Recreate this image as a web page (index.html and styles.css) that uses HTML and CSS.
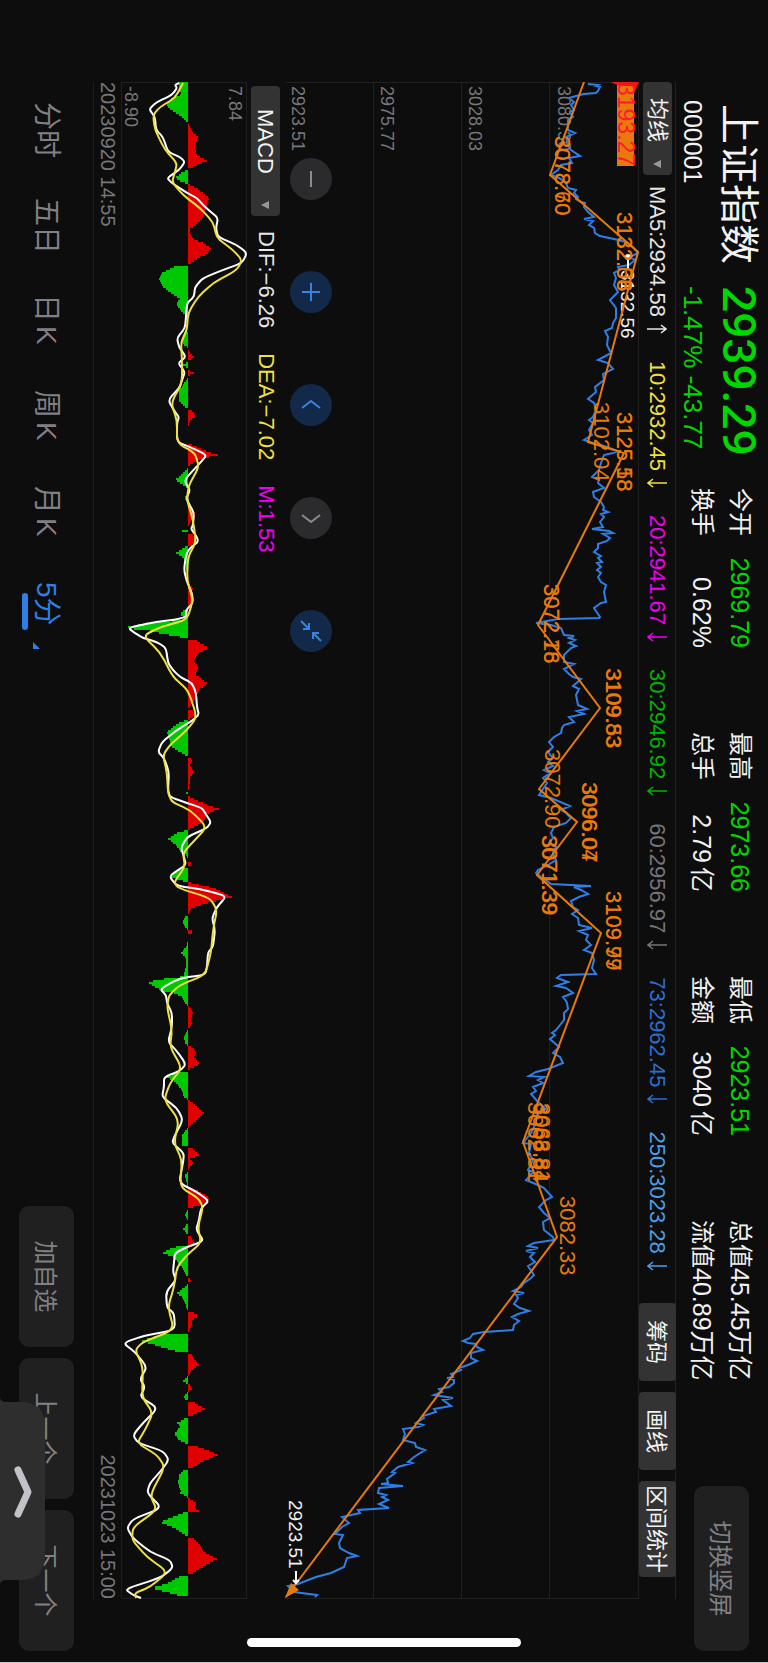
FILE: index.html
```html
<!DOCTYPE html>
<html lang="zh-CN">
<head>
    <meta charset="UTF-8">
    <meta name="viewport" content="width=device-width, initial-scale=1.0">
    <title>上证指数 000001</title>
    <link rel="stylesheet" href="styles.css">
</head>
<body>

<svg class="defs" width="0" height="0">
    <symbol id="up" viewBox="0 0 14 20"><path d="M7 20V1M3 6l4-5 4 5"/></symbol>
    <symbol id="down" viewBox="0 0 14 20"><path d="M7 0v19M3 14l4 5 4-5"/></symbol>
</svg>

<div class="stage">
<div class="screen">
    <!-- Quote header -->
    <header class="quote">
        <div class="stock">
            <h1>上证指数</h1>
            <p>000001</p>
        </div>
        <div class="price">
            <strong>2939.29</strong>
            <p>-1.47% -43.77</p>
        </div>
        <dl class="stats">
            <div><dt>今开</dt><dd class="green">2969.79</dd></div>
            <div><dt>最高</dt><dd class="green">2973.66</dd></div>
            <div><dt>最低</dt><dd class="green">2923.51</dd></div>
            <div><dt>总值</dt><dd>45.45万亿</dd></div>
            <div><dt>换手</dt><dd>0.62%</dd></div>
            <div><dt>总手</dt><dd>2.79<span class="unit">亿</span></dd></div>
            <div><dt>金额</dt><dd>3040<span class="unit">亿</span></dd></div>
            <div><dt>流值</dt><dd>40.89万亿</dd></div>
        </dl>
        <button class="btn switch-btn">切换竖屏</button>
    </header>

    <main class="charts">
        <!-- Moving averages -->
        <div class="indicator-row ma-row">
            <div class="picker">
                <select aria-label="主图指标"><option>均线</option></select>
                <svg viewBox="0 0 8 8"><path d="M0 0h8L4 8z"/></svg>
            </div>
            <ul class="values">
                <li class="c-white">MA5:2934.58<svg><use href="#up"/></svg></li>
                <li class="c-yellow">10:2932.45<svg><use href="#down"/></svg></li>
                <li class="c-pink">20:2941.67<svg><use href="#down"/></svg></li>
                <li class="c-green">30:2946.92<svg><use href="#down"/></svg></li>
                <li class="c-grey">60:2956.97<svg><use href="#down"/></svg></li>
                <li class="c-blue">73:2962.45<svg><use href="#down"/></svg></li>
                <li class="c-sky">250:3023.28<svg><use href="#down"/></svg></li>
            </ul>
            <div class="tools">
                <button>筹码</button>
                <button>画线</button>
                <button class="wide">区间统计</button>
            </div>
        </div>

        <!-- Price chart -->
        <div class="price-chart">
            <svg id="priceChart" viewBox="82 130 1517 354">
                <path class="grid" d="M82 130.5H1599M82 219.5H1599M82 307.5H1599M82 395.5H1599M82.5 130V484M1598.5 130V484"/>
                <g class="axis">
                    <text x="86" y="211">3080.30</text>
                    <text x="86" y="300">3028.03</text>
                    <text x="86" y="388">2975.77</text>
                    <text x="86" y="477">2923.51</text>
                </g>
                <polyline id="priceLine" class="price-line"/>
                <path class="mark" d="M257 141H269"/>
                <circle class="mark-dot" cx="257" cy="141" r="3"/>
                <text class="mark-text" x="270" y="148">3132.56</text>
                <rect class="flag" x="82" y="135" width="84" height="17"/>
                <path class="flag-tip" d="M82 130v28l4-8v-14l5-2z"/>
                <polyline id="waveLine" class="wave-line"/>
                <path class="wave-tip" d="M1583 478l7-8 8 14z"/>
                <g id="waveLabels" class="wave-labels"></g>
                <text class="flag-text" x="83" y="151">3193.27</text>
                <text class="mark-text" x="1500" y="480">2923.51</text>
                <path class="mark" d="M1571 473h12M1580 470l3 3-3 3"/>
            </svg>
            <div class="chart-controls">
                <button aria-label="缩小"><svg viewBox="0 0 42 42"><path d="M13 21h16"/></svg></button>
                <button aria-label="放大" class="on"><svg viewBox="0 0 42 42"><path d="M12 21h18M21 12v18"/></svg></button>
                <button aria-label="左移" class="on"><svg viewBox="0 0 42 42"><path d="M24 12l-7 9 7 9"/></svg></button>
                <button aria-label="右移"><svg viewBox="0 0 42 42"><path d="M18 12l7 9-7 9"/></svg></button>
                <button aria-label="收起" class="on"><svg viewBox="0 0 42 42"><path d="M31 11l-8 8M23 13v6h6M11 31l8-8M13 23h6v6"/></svg></button>
            </div>
        </div>

        <!-- MACD -->
        <div class="indicator-row macd-row">
            <div class="picker macd-picker">
                <select aria-label="副图指标"><option>MACD</option></select>
                <svg viewBox="0 0 8 8"><path d="M0 0h8L4 8z"/></svg>
            </div>
            <ul class="values">
                <li class="c-white">DIF:−6.26</li>
                <li class="c-yellow">DEA:−7.02</li>
                <li class="c-pink">M:1.53</li>
            </ul>
        </div>
        <svg id="macdChart" class="macd-chart" viewBox="82 521 1517 126">
            <path class="grid" d="M82 521.5H1599M82 646.5H1599M82.5 521V647M1598.5 521V647"/>
            <g class="axis">
                <text x="86" y="539">7.84</text>
                <text x="86" y="643">-8.90</text>
            </g>
            <path id="barsUp" class="bars-up"/>
            <path id="barsDown" class="bars-down"/>
            <path id="difLine" class="dif-line"/>
            <path id="deaLine" class="dea-line"/>
        </svg>
        <div class="dates">
            <time>20230920 14:55</time>
            <time>20231023 15:00</time>
        </div>
    </main>

    <!-- Period tabs and actions -->
    <footer class="bottom">
        <nav class="tabs">
            <a href="#">分时</a>
            <a href="#">五日</a>
            <a href="#">日<span class="unit">K</span></a>
            <a href="#">周<span class="unit">K</span></a>
            <a href="#">月<span class="unit">K</span></a>
            <a href="#" class="active">5分</a>
        </nav>
        <div class="actions">
            <button class="btn">加自选</button>
            <button class="btn">上一个</button>
            <button class="btn">下一个</button>
        </div>
    </footer>

    <button class="drawer" aria-label="展开">
        <svg viewBox="0 0 186 45">
            <path class="drawer-bg" d="M0 45q4-1 4-6V24Q4 0 28 0H158q24 0 24 24v15q0 5 4 6z"/>
            <path class="drawer-arrow" d="M72 27l22-10 22 10"/>
        </svg>
    </button>
    <div class="home-bar"></div>
</div>
</div>

<script src="script.js"></script>
</body>
</html>
```
FILE: styles.css
```css
* {
    box-sizing: border-box;
    margin: 0;
    padding: 0;
}

body {
    background-color: #0d0d0d;
    color: #f2f2f2;
    font-family: "Liberation Sans", "Noto Sans CJK SC", sans-serif;
}

button,
select {
    border: none;
    color: inherit;
    font-family: inherit;
    cursor: pointer;
}

ul {
    list-style: none;
}

.defs {
    position: absolute;
}

.stage {
    position: relative;
    width: 100%;
    height: 100vh;
    overflow: hidden;
}

/* Landscape screen, turned clockwise */
.screen {
    position: relative;
    display: flex;
    flex-direction: column;
    width: 100vh;
    height: 100vw;
    border-right: 1px solid #c8c8c8;
    transform-origin: 0 0;
    transform: translateX(100vw) rotate(90deg);
}

/* Quote header */
.quote {
    display: flex;
    height: 92px;
    padding: 0 11px 0 100px;
}

.stock {
    width: 186px;
}

.stock h1 {
    padding-left: 4px;
    font-size: 40px;
    font-weight: 400;
    line-height: 58px;
    white-space: nowrap;
}

.stock p,
.price p {
    font-size: 25px;
    line-height: 34px;
}

.price {
    width: 202px;
    color: #00d600;
    white-space: nowrap;
}

.price p {
    font-size: 26px;
}

.price strong {
    display: block;
    font-family: Roboto, sans-serif;
    font-size: 46px;
    font-weight: 500;
    line-height: 58px;
}

.stats {
    display: grid;
    grid-template-columns: repeat(4, 160px);
    grid-auto-rows: 38px;
    column-gap: 84px;
    padding-top: 9px;
    line-height: 38px;
}

.stats div {
    display: flex;
    justify-content: space-between;
    white-space: nowrap;
}

.stats dt {
    font-size: 24px;
}

.stats dd {
    font-size: 25px;
}

.green {
    color: #00d600;
}

.unit {
    margin-left: 4px;
}

.btn {
    width: 141px;
    height: 55px;
    padding-bottom: 2px;
    border-radius: 10px;
    background-color: #202020;
    color: #808085;
    font-size: 24px;
}

.switch-btn {
    width: 165px;
    margin: 19px 0 0 auto;
}

/* Chart area */
.charts {
    margin: 0 63px 0 82px;
}

.indicator-row {
    display: flex;
    align-items: center;
    height: 37px;
    font-size: 22px;
}

.ma-row {
    box-shadow: inset 0 1px #222;
}

.macd-row {
    height: 38px;
}

.picker {
    position: relative;
    width: 93px;
    height: 29px;
}

.picker select {
    width: 100%;
    height: 100%;
    padding-left: 16px;
    border-radius: 4px;
    background-color: #333;
    font-size: 22px;
    appearance: none;
}

.picker svg {
    position: absolute;
    top: 11px;
    right: 7px;
    width: 8px;
    height: 8px;
    fill: #98989c;
}

.macd-picker {
    width: 130px;
    margin-left: 4px;
}

.macd-picker select {
    padding-left: 23px;
}

.values {
    display: flex;
    gap: 25px;
    padding-left: 11px;
    white-space: nowrap;
}

.values li {
    display: flex;
    align-items: center;
}

.macd-row .values {
    padding-left: 15px;
}

.values svg {
    width: 14px;
    height: 20px;
    margin-left: 5px;
    fill: none;
    stroke: currentColor;
    stroke-width: 1.5;
}

.c-white { color: #e6e6e6; }
.c-yellow { color: #f0e040; }
.c-pink { color: #f000f0; }
.c-green { color: #00b400; }
.c-grey { color: #76767a; }
.c-blue { color: #2c6fd0; }
.c-sky { color: #4aa0e6; }

.tools {
    display: flex;
    gap: 11px;
    margin: 0 22px 0 auto;
}

.tools button {
    width: 78px;
    height: 37px;
    padding-bottom: 3px;
    border-radius: 4px;
    background-color: #333;
    font-size: 22px;
}

.tools .wide {
    width: 96px;
}

.price-chart {
    position: relative;
}

.price-chart > svg,
.macd-chart {
    display: block;
    width: 100%;
}

.grid {
    fill: none;
    stroke: #202020;
    stroke-width: 1;
}

.axis {
    fill: #77777b;
    font-size: 18px;
}

.price-line,
.wave-line {
    fill: none;
    stroke-width: 2;
}

.price-line { stroke: #2f7fe6; }
.wave-line { stroke: #e87a0c; }
.wave-tip,
.flag { fill: #e87a0c; }
.flag-tip { fill: #f01414; }

.flag-text {
    fill: #ff1a2e;
    font-size: 23px;
}

.wave-labels {
    fill: #e87a0c;
    font-size: 22px;
}

.mark {
    fill: none;
    stroke: #fff;
    stroke-width: 2;
}

.mark-dot { fill: #fff; }

.mark-text {
    fill: #f2f2f2;
    font-size: 19px;
}

/* Round buttons over the chart */
.chart-controls {
    position: absolute;
    left: 76px;
    bottom: 5px;
    display: flex;
    gap: 71px;
}

.chart-controls button {
    width: 42px;
    height: 42px;
    border-radius: 50%;
    background-color: #2b2b2d;
    color: #8c8c90;
}

.chart-controls .on {
    background-color: #13294a;
    color: #3a82e0;
}

.chart-controls svg {
    display: block;
    fill: none;
    stroke: currentColor;
    stroke-width: 2;
}

/* MACD */
.bars-up { fill: #e00000; }
.bars-down { fill: #00c800; }

.dif-line,
.dea-line {
    fill: none;
    stroke: #fff;
    stroke-width: 2;
}

.dea-line { stroke: #f0e040; }

.dates {
    display: flex;
    justify-content: space-between;
    height: 28px;
    border-bottom: 1px solid #1c1c1c;
    color: #77777b;
    font-size: 20px;
    line-height: 26px;
}

/* Bottom bar */
.bottom {
    display: flex;
    flex: 1;
    align-items: center;
    justify-content: space-between;
    padding: 0 11px 0 102px;
}

.tabs {
    display: flex;
}

.tabs a {
    width: 96px;
    color: #808085;
    font-size: 28px;
    line-height: 40px;
    text-decoration: none;
    white-space: nowrap;
}

.tabs .active {
    position: relative;
    color: #2f7fe6;
}

.tabs .active::before {
    content: "";
    position: absolute;
    left: 11px;
    bottom: -4px;
    width: 37px;
    height: 6px;
    border-radius: 3px;
    background-color: #2f7fe6;
}

.tabs .active::after {
    content: "";
    position: absolute;
    left: 60px;
    bottom: 7px;
    border-bottom: 7px solid #2f7fe6;
    border-left: 7px solid transparent;
}

.actions {
    display: flex;
    gap: 11px;
}

.drawer {
    position: absolute;
    right: 78px;
    bottom: 0;
    width: 186px;
    height: 45px;
    background: none;
}

.drawer svg {
    display: block;
}

.drawer-bg { fill: #2e2e2e; }

.drawer-arrow {
    fill: none;
    stroke: #c4c2c9;
    stroke-width: 7;
    stroke-linecap: round;
    stroke-linejoin: round;
}

.home-bar {
    position: absolute;
    top: 247px;
    right: 15px;
    width: 9px;
    height: 274px;
    border-radius: 5px;
    background-color: #fff;
}
```
FILE: script.js
```js
// Every series is a flat list: time, level, time, level ...
const BASE = 768;
const ZERO = 188;

const price = `84,587 85,597 86,595 87,599 91,597 93,595 94,583 96,575 98,568 102,573 105,570 110,573 112,569 117,572
120,567 130,567 133,574 137,565 145,567 150,570 156,579 158,568 163,571 165,560 170,557 175,550 178,558 183,565 188,567
190,575 193,573 197,577 199,575 202,580 203,584 207,583 212,587 217,593 219,583 221,592 225,588 228,593 233,594 236,599
239,613 242,625 247,632 253,637 257,629 260,634 265,628 267,617 270,618 273,613 278,615 285,613 292,617 300,609 308,615
318,615 323,612 328,611 331,604 337,607 345,606 353,610 360,597 363,607 369,612 374,602 380,603 387,594 392,595 399,587
403,593 410,595 417,592 420,588 423,592 430,588 435,591 440,583 444,595 445,600 451,617 453,612 455,603 463,600 470,598
477,591 480,598 483,597 488,603 492,592 497,593 502,600 507,603 510,602 512,607 514,600 517,603 522,599 527,602 529,591
531,608 533,612 534,602 538,609 541,606 544,597 548,597 552,593 556,600 558,597 562,601 563,596 567,600 570,596 573,600
577,597 582,600 585,605 592,603 602,605 603,600 608,593 617,599 618,598 619,557 623,535 625,550 628,560 635,563 636,573
638,568 640,574 643,568 646,575 648,570 655,563 662,563 664,573 669,563 674,568 677,572 679,580 686,572 689,578 695,575
705,577 709,586 711,576 714,583 717,568 722,573 725,563 728,561 733,560 737,553 742,548 747,552 752,547 758,552 762,547
766,552 770,543 773,549 778,542 783,546 795,538 798,550 806,569 810,560 813,565 818,570 823,565 827,553 833,550 838,552
843,548 847,555 853,552 860,555 865,547 870,537 873,535 877,540 884,550 886,590 887,573 890,580 894,587 897,578 901,570
907,572 910,577 914,571 918,577 925,578 928,591 931,578 935,587 940,585 945,590 950,583 953,591 960,593 968,591 974,595
975,560 978,556 982,567 986,555 988,565 993,572 997,562 1001,565 1003,566 1009,567 1013,563 1020,563 1030,555 1033,551
1035,554 1039,549 1047,558 1053,552 1057,559 1063,562 1069,547 1072,535 1076,528 1077,543 1080,537 1083,542 1087,532
1091,535 1094,530 1102,537 1109,545 1113,537 1127,533 1133,530 1143,522 1144,530 1153,528 1160,532 1170,527 1172,532
1180,525 1185,537 1188,543 1197,551 1200,545 1207,538 1213,543 1218,549 1222,542 1230,543 1237,552 1240,553 1243,533
1246,527 1248,537 1251,525 1253,533 1257,529 1262,534 1266,527 1275,533 1278,530 1283,523 1287,520 1291,512 1293,523
1295,515 1298,517 1304,513 1308,519 1311,528 1314,517 1317,511 1321,518 1325,513 1330,512 1332,483 1334,472 1338,469
1341,462 1343,467 1344,475 1347,476 1350,482 1353,470 1358,470 1361,476 1365,467 1368,458 1370,460 1374,450 1377,452
1378,446 1380,453 1383,453 1387,448 1389,438 1392,441 1395,433 1398,452 1400,442 1406,450 1409,433 1412,435 1416,422
1418,423 1423,415 1425,422 1427,417 1429,402 1434,404 1440,402 1443,414 1447,415 1450,424 1457,413 1462,407 1463,411
1467,397 1472,391 1473,394 1479,386 1483,387 1484,380 1486,402 1488,378 1493,377 1495,385 1497,381 1500,387 1504,378
1508,388 1510,357 1513,359 1517,341 1523,348 1527,341 1530,338 1534,334 1535,342 1543,338 1548,339 1553,348 1556,356
1558,346 1567,343 1573,330 1577,315 1584,297 1586,287 1592,293 1595,316 1597,314`;

const wave = `82,583 175,549 252,637 442,587 453,623 625,537 708,599 789,538 822,576 875,536 933,600 1142,522 1237,556 1597,285`;

// Turning point labels, some of them drawn twice from neighbouring waves
const labels = [
    [136, 554, '3078.60'], [136, 554, '3078.70'],
    [212, 616, '3132.08'], [212, 616, '3132.56'],
    [402, 593, '3102.04'],
    [412, 616, '3125.58'], [412, 616, '3125.18'],
    [584, 543, '3072.78'], [584, 543, '3072.16'],
    [668, 605, '3109.83'], [669, 605, '3109.53'],
    [749, 544, '3072.90'],
    [782, 581, '3096.04'], [783, 581, '3096.07'],
    [835, 541, '3071.39'], [836, 541, '3071.39'],
    [891, 605, '3109.99'], [891, 605, '3109.77'],
    [1102, 527, '3062.81'], [1103, 532, '3068.84'], [1103, 534, '3063.81'],
    [1196, 559, '3082.33']
];

const bars = `82,-9 90,-9 93,-6 97,-16 103,-22 108,-18 113,-10 119,-3 122,0 125,2 131,4 136,10 145,7 153,8 156,12 160,19
163,11 167,3 168,0 172,-7 177,-13 181,-6 183,0 188,10 197,21 203,19 210,17 217,15 223,9 228,2 233,2 238,6 243,17 248,23
253,19 257,10 261,4 264,0 266,-14 272,-26 278,-29 285,-26 292,-17 298,-8 303,-12 310,-7 315,-2 317,0 330,0 332,-4 340,-7
345,-3 347,0 349,0 352,2 356,6 359,2 360,0 361,0 364,-6 367,0 369,0 372,6 375,0 378,-1 384,-5 390,-9 400,-9 405,-4 408,0
410,4 415,8 420,2 426,0 442,0 447,11 451,20 454,30 457,17 461,7 465,0 467,0 473,-6 479,-13 484,-5 487,0 493,0 497,-4
502,0 504,0 507,4 513,7 520,3 527,0 529,-1 530,-6 531,-1 532,0 533,4 540,8 544,4 545,0 546,-3 549,-8 552,-12 557,-5
562,-2 575,-1 576,0 582,0 586,4 588,5 595,3 602,4 606,1 608,0 609,-4 613,-8 617,-4 619,-2 621,-30 623,-45 626,-60
627,-62 630,-38 633,-25 636,-8 638,0 640,9 647,21 653,9 660,6 667,11 673,7 678,14 683,20 688,12 697,8 706,2 708,0 709,4
714,8 718,2 719,0 721,-8 726,-15 731,-21 737,-19 745,-17 750,-10 755,-1 756,0 759,4 764,2 771,6 776,2 788,1 789,0 790,0
792,-2 794,0 795,0 799,8 804,19 808,31 813,19 819,17 825,8 829,0 831,-9 838,-20 844,-12 850,-8 855,-1 859,0 860,0 863,5
866,0 867,-4 872,-14 876,-16 879,-10 881,0 883,6 887,26 891,34 896,44 900,28 903,16 907,4 912,1 914,0 915,-3 921,-5
927,-3 929,0 930,4 932,4 934,0 936,0 945,-1 952,-7 957,-2 965,-2 972,-4 975,-4 976,-8 978,-24 981,-40 986,-33 990,-26
992,-14 996,-6 1003,-2 1005,0 1007,2 1011,5 1018,3 1023,4 1028,0 1031,-2 1036,-4 1043,-3 1045,0 1047,5 1051,8 1056,6
1063,12 1068,2 1070,0 1072,-10 1076,-22 1080,-14 1088,-7 1096,-4 1099,0 1101,4 1107,10 1112,16 1118,10 1124,3 1127,0
1129,-2 1134,-6 1144,-6 1146,0 1148,5 1154,11 1158,2 1162,5 1168,1 1170,0 1172,-1 1175,-4 1178,-2 1184,-1 1185,0 1186,0
1190,10 1197,22 1202,19 1206,5 1208,0 1209,-1 1214,-3 1219,0 1222,0 1224,-2 1228,-5 1234,0 1235,3 1240,5 1244,6 1245,0
1246,-12 1249,-21 1252,-25 1256,-15 1265,-7 1273,-3 1276,0 1277,0 1279,4 1282,0 1284,-1 1288,-6 1292,-11 1297,-5
1308,-1 1310,0 1311,4 1315,10 1320,4 1325,4 1332,0 1333,-22 1337,-38 1340,-46 1345,-30 1350,-13 1352,0 1354,4 1359,7
1364,11 1370,3 1375,0 1376,-1 1380,-5 1383,0 1384,2 1388,4 1391,0 1392,-1 1397,-5 1400,0 1401,5 1404,10 1408,17 1413,7
1416,0 1418,-4 1422,-11 1426,-8 1433,-14 1439,-9 1443,-1 1444,0 1445,7 1449,19 1454,30 1460,16 1466,5 1468,0 1470,-5
1474,-9 1482,-10 1486,-9 1489,-7 1492,-8 1496,-1 1497,0 1498,2 1503,9 1507,6 1510,11 1511,0 1512,-5 1517,-18 1521,-28
1527,-14 1532,-6 1536,0 1538,6 1544,12 1549,14 1554,21 1558,29 1563,20 1567,13 1572,5 1574,0 1576,-9 1583,-22 1587,-37
1591,-22 1595,-8 1596,0 1597,2 1598,10`;

const dif = `83,179 85,175 88,177 95,172 102,157 109,149 117,155 130,156 137,163 152,168 157,180 162,185 170,179 178,167
183,172 193,187 198,197 205,203 212,211 218,218 228,216 237,218 245,237 253,247 263,242 270,223 278,203 287,195 297,194
303,187 317,186 328,185 338,177 347,179 357,186 363,178 372,185 380,182 387,180 400,168 412,175 417,179 423,177 442,177
447,190 455,207 463,200 477,187 482,185 490,190 497,187 502,188 513,194 525,193 529,191 537,197 542,198 548,190 555,186
570,184 582,187 593,192 603,193 610,186 618,186 623,150 628,128 633,135 638,143 642,157 648,166 663,168 670,173 677,180
683,192 693,196 707,197 715,199 722,190 730,177 742,162 752,158 758,164 772,169 790,168 797,170 803,187 808,202 813,205
822,211 828,207 837,187 848,181 857,184 865,186 876,169 886,177 889,200 895,223 898,225 907,217 918,212 930,215 947,213
952,208 967,207 975,205 978,180 989,160 995,166 1003,167 1013,172 1027,172 1042,168 1050,176 1064,186 1071,180 1077,164
1087,164 1097,162 1108,177 1120,183 1135,175 1143,172 1153,184 1163,183 1183,179 1192,197 1201,209 1208,201 1220,199
1230,196 1241,204 1247,187 1253,175 1262,174 1272,173 1280,176 1292,166 1308,167 1313,174 1330,175 1336,143 1343,123
1352,135 1367,147 1379,140 1387,145 1397,140 1408,158 1423,143 1435,133 1443,138 1451,163 1460,169 1472,160 1483,150
1493,147 1508,162 1519,133 1528,127 1538,133 1552,150 1560,170 1568,173 1578,160 1589,125 1595,133 1598,141`;

const dea = `83,183 98,175 107,160 115,153 130,155 150,165 163,177 172,175 182,172 195,183 208,200 222,213 238,217 250,233
260,242 270,237 283,213 297,198 313,188 330,187 342,181 360,182 383,182 403,171 420,177 443,177 453,195 467,199 483,190
490,188 500,187 520,193 542,196 557,188 580,187 600,193 620,187 627,160 636,143 652,160 677,173 690,188 717,197 730,187
745,170 755,163 773,167 793,168 802,172 810,190 827,207 842,193 853,183 867,185 882,174 888,178 898,210 910,217 930,213
953,211 975,205 985,180 995,169 1007,167 1030,172 1047,170 1068,182 1083,170 1100,164 1120,179 1143,174 1160,182
1187,180 1198,198 1207,203 1227,198 1243,201 1255,187 1267,177 1287,174 1307,168 1330,174 1342,143 1350,135 1367,143
1397,142 1413,153 1430,145 1443,137 1455,157 1467,165 1495,150 1510,157 1527,133 1540,132 1557,147 1572,168 1587,150
1593,135 1598,136`;

function parse(text) {
    return text.trim().split(/\s+/).map(pair => pair.split(',').map(Number));
}

function drawLine(id, text) {
    const points = parse(text).map(([t, v]) => t + ',' + (BASE - v));
    document.getElementById(id).setAttribute('points', points.join(' '));
}

// Straight segments with the corners rounded off
function drawCurve(id, text) {
    const p = parse(text).map(([t, v]) => [t, BASE - v]);
    let d = 'M' + p[0];
    for (let i = 1; i < p.length - 1; i++) {
        const before = [(p[i - 1][0] + p[i][0] * 2) / 3, (p[i - 1][1] + p[i][1] * 2) / 3];
        const after = [(p[i][0] * 2 + p[i + 1][0]) / 3, (p[i][1] * 2 + p[i + 1][1]) / 3];
        d += 'L' + before + 'Q' + p[i] + ' ' + after;
    }
    d += 'L' + p[p.length - 1];
    document.getElementById(id).setAttribute('d', d);
}

function drawBars() {
    const p = parse(bars);
    const zeroY = BASE - ZERO;
    let up = '';
    let down = '';
    let i = 0;
    for (let t = 82; t < 1598; t += 2) {
        while (i < p.length - 2 && p[i + 1][0] <= t) i++;
        const [t0, v0] = p[i];
        const [t1, v1] = p[i + 1];
        const v = Math.round(v0 + (v1 - v0) * (t - t0) / (t1 - t0));
        if (v > 0) up += `M${t} ${zeroY}v${-v}h2v${v}z`;
        if (v < 0) down += `M${t} ${zeroY}v${-v}h2v${v}z`;
    }
    document.getElementById('barsUp').setAttribute('d', up);
    document.getElementById('barsDown').setAttribute('d', down);
}

function drawLabels() {
    const group = document.getElementById('waveLabels');
    labels.forEach(([t, v, text]) => {
        const el = document.createElementNS('http://www.w3.org/2000/svg', 'text');
        el.setAttribute('x', t);
        el.setAttribute('y', BASE - v);
        el.textContent = text;
        group.appendChild(el);
    });
}

drawLine('priceLine', price);
drawLine('waveLine', wave);
drawLabels();
drawBars();
drawCurve('difLine', dif);
drawCurve('deaLine', dea);
```
